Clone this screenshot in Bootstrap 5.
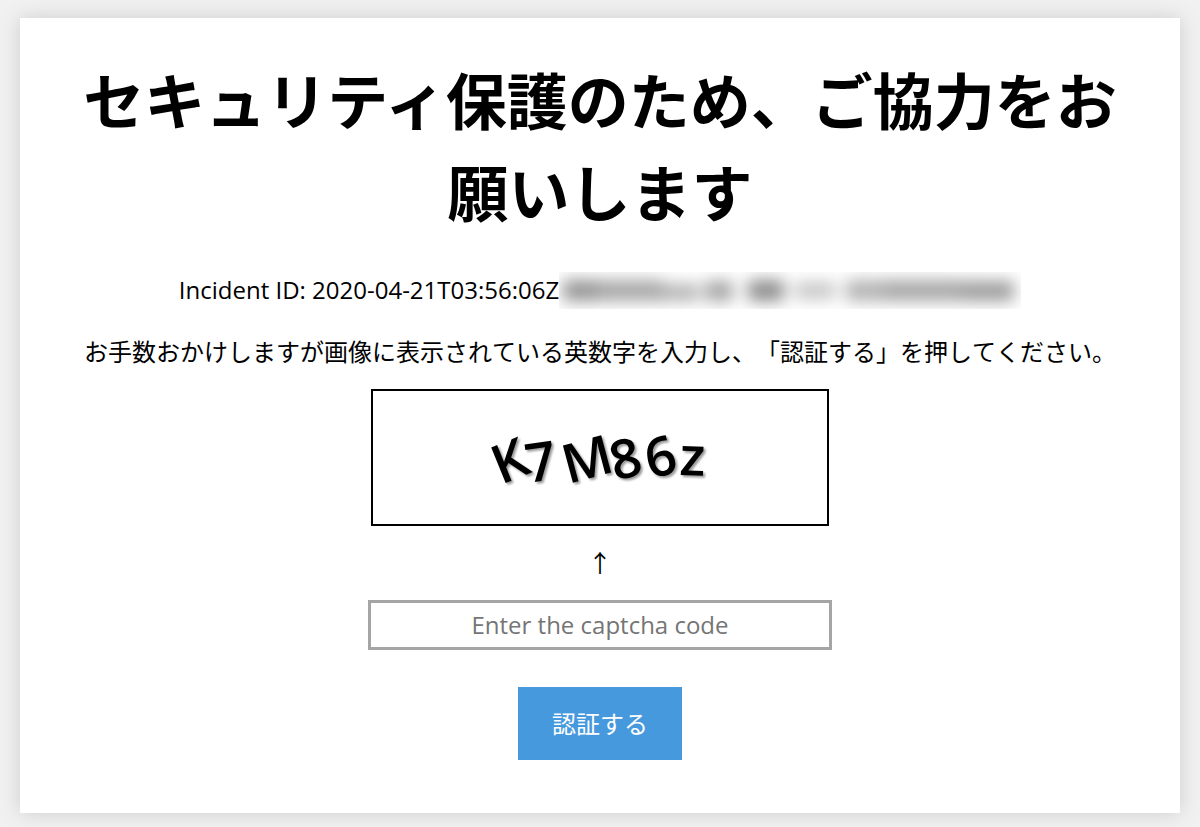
<!DOCTYPE html>
<html lang="ja">
<head>
<meta charset="utf-8">
<meta name="viewport" content="width=device-width, initial-scale=1">
<title>セキュリティ保護のため、ご協力をお願いします</title>
<link href="https://cdn.jsdelivr.net/npm/bootstrap@5.3.0/dist/css/bootstrap.min.css" rel="stylesheet">
<style>
  body { background: #f1f1f1; color: #000; font-family: "Noto Sans CJK JP", sans-serif; font-size: 24px; line-height: 36px; }
  .panel { margin: 18px 20px 14px; padding: 35px 56px 53px; background: #fff; box-shadow: 0 0 20px rgba(0, 0, 0, .15); }
  h1 { font-size: 61px; line-height: 92px; margin-bottom: 35px; }
  .latin { font-family: "Open Sans", sans-serif; }
  .incident { margin-bottom: 24px; }
  .redacted { width: 462px; height: 37px; }
  .notice { margin-bottom: 20px; font-kerning: none; text-spacing-trim: space-all; }
  .captcha-image { width: 458px; max-width: 100%; height: 137px; border: 2px solid #000; }
  .captcha-image text { font-family: "Open Sans", sans-serif; font-weight: 600; font-size: 54px; filter: drop-shadow(2px 2px 1px rgba(0, 0, 0, .4)); }
  .arrow { margin: 18px 0 20px; color: #000; }
  .code-box { width: 464px; max-width: 100%; height: 50px; padding: 0 8px 2px; border: 3px solid #a5a5a5; border-radius: 0; text-align: center; color: #000; font-size: 24px; }
  .code-box::placeholder { color: #757575; }
  .submit-btn { height: 73px; margin-top: 37px; padding: 0 34px 2px; border: 0; border-radius: 0; background: #4799dd; color: #fff; font-size: 24px; }
</style>
</head>
<body>
<main class="panel text-center">
  <h1 class="fw-bold">セキュリティ保護のため、ご協力をお願いします</h1>
  <div class="incident latin d-flex justify-content-center">
    <span class="text-nowrap">Incident ID: 2020-04-21T03:56:06Z</span>
    <svg class="redacted" viewBox="0 0 462 37" aria-hidden="true">
      <defs><filter id="haze" x="-10%" y="-100%" width="120%" height="300%" color-interpolation-filters="sRGB"><feGaussianBlur stdDeviation="8"/></filter></defs>
      <g filter="url(#haze)" fill="#666">
        <rect x="4" y="8" width="34" height="21" opacity=".7"/>
        <rect x="38" y="8" width="66" height="21" opacity=".58"/>
        <rect x="104" y="12" width="36" height="17" opacity=".5"/>
        <rect x="146" y="9" width="28" height="20" opacity=".6"/>
        <rect x="189" y="8" width="36" height="21" opacity=".75"/>
        <rect x="236" y="10" width="40" height="17" opacity=".38"/>
        <rect x="287" y="8" width="38" height="21" opacity=".5"/>
        <rect x="325" y="8" width="80" height="21" opacity=".58"/>
        <rect x="405" y="9" width="50" height="20" opacity=".65"/>
      </g>
    </svg>
  </div>
  <p class="notice">お手数おかけしますが画像に表示されている英数字を入力し、「認証する」を押してください。</p>
  <form>
    <svg class="captcha-image d-block mx-auto" viewBox="0 0 454 133" role="img" aria-label="captcha">
      <text x="128 155 195 242 277 306" y="94 92 93 90 88 84" rotate="-22 -8 -15 -14 -14 2">K7M86z</text>
    </svg>
    <label for="code" class="arrow d-block">↑</label>
    <input id="code" class="code-box form-control latin mx-auto" type="text" placeholder="Enter the captcha code" autocomplete="off">
    <button class="submit-btn btn" type="submit">認証する</button>
  </form>
</main>
<script src="https://cdn.jsdelivr.net/npm/bootstrap@5.3.0/dist/js/bootstrap.bundle.min.js"></script>
</body>
</html>
